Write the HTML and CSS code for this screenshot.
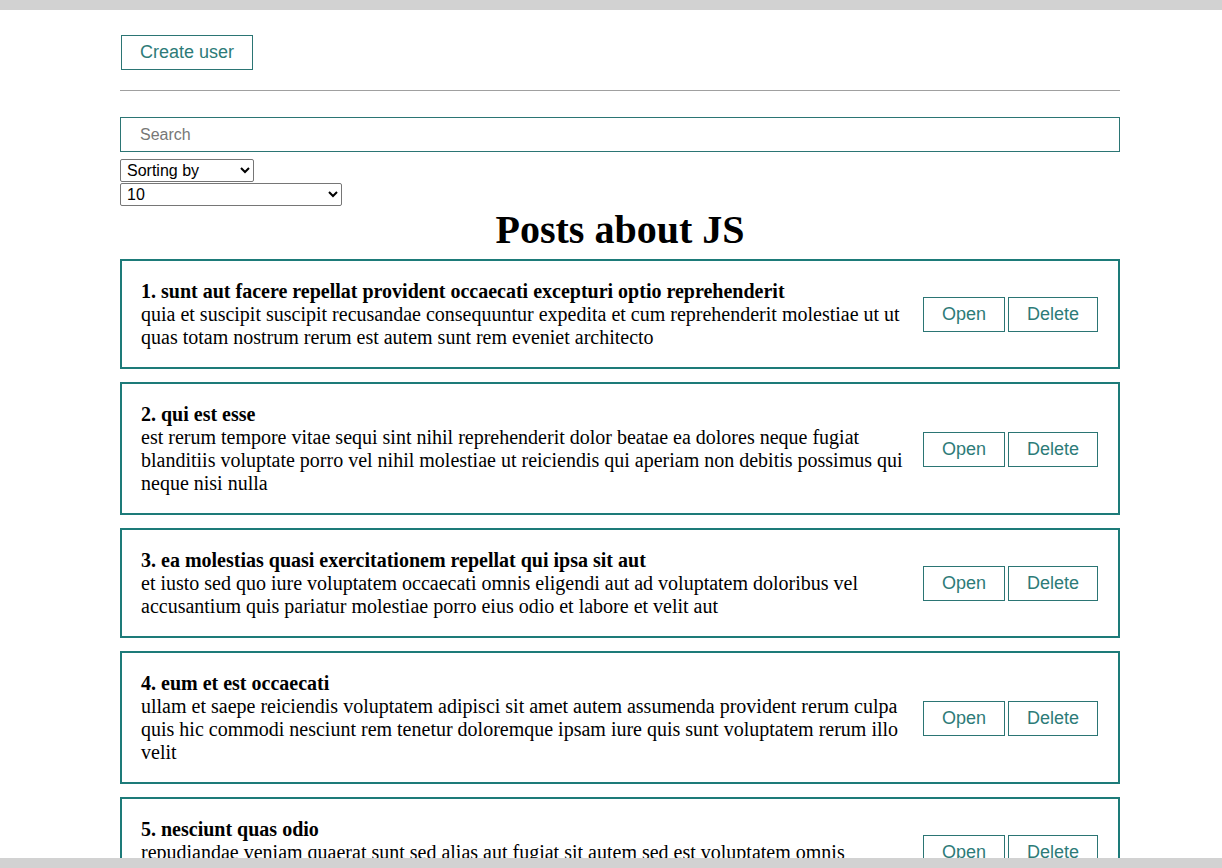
FILE: index.html
```html
<!DOCTYPE html>
<html lang="en">
<head>
<meta charset="utf-8">
<title>Posts about JS</title>
<link rel="stylesheet" href="styles.css">
</head>
<body>
<div class="topbar"></div>
<div class="app">
  <button class="btn btn-create">Create user</button>
  <hr class="divider">
  <input class="search" type="text" placeholder="Search">
  <div class="selects">
    <select class="select select-sort">
      <option>Sorting by</option>
      <option>By title</option>
      <option>By description</option>
    </select>
    <select class="select select-limit">
      <option>10</option>
      <option>25</option>
      <option>Show all posts on page</option>
    </select>
  </div>
  <h1 class="heading">Posts about JS</h1>
  <div class="posts">
    <div class="post">
      <div class="post-content">
        <strong class="post-title">1. sunt aut facere repellat provident occaecati excepturi optio reprehenderit</strong>
        <div class="post-body">quia et suscipit suscipit recusandae consequuntur expedita et cum reprehenderit molestiae ut ut quas totam nostrum rerum est autem sunt rem eveniet architecto</div>
      </div>
      <div class="post-btns">
        <button class="btn btn-post">Open</button>
        <button class="btn btn-post">Delete</button>
      </div>
    </div>
    <div class="post">
      <div class="post-content">
        <strong class="post-title">2. qui est esse</strong>
        <div class="post-body">est rerum tempore vitae sequi sint nihil reprehenderit dolor beatae ea dolores neque fugiat blanditiis voluptate porro vel nihil molestiae ut reiciendis qui aperiam non debitis possimus qui neque nisi nulla</div>
      </div>
      <div class="post-btns">
        <button class="btn btn-post">Open</button>
        <button class="btn btn-post">Delete</button>
      </div>
    </div>
    <div class="post">
      <div class="post-content">
        <strong class="post-title">3. ea molestias quasi exercitationem repellat qui ipsa sit aut</strong>
        <div class="post-body">et iusto sed quo iure voluptatem occaecati omnis eligendi aut ad voluptatem doloribus vel accusantium quis pariatur molestiae porro eius odio et labore et velit aut</div>
      </div>
      <div class="post-btns">
        <button class="btn btn-post">Open</button>
        <button class="btn btn-post">Delete</button>
      </div>
    </div>
    <div class="post">
      <div class="post-content">
        <strong class="post-title">4. eum et est occaecati</strong>
        <div class="post-body">ullam et saepe reiciendis voluptatem adipisci sit amet autem assumenda provident rerum culpa quis hic commodi nesciunt rem tenetur doloremque ipsam iure quis sunt voluptatem rerum illo velit</div>
      </div>
      <div class="post-btns">
        <button class="btn btn-post">Open</button>
        <button class="btn btn-post">Delete</button>
      </div>
    </div>
    <div class="post">
      <div class="post-content">
        <strong class="post-title">5. nesciunt quas odio</strong>
        <div class="post-body">repudiandae veniam quaerat sunt sed alias aut fugiat sit autem sed est voluptatem omnis possimus esse voluptatibus quis est aut tenetur dolor neque</div>
      </div>
      <div class="post-btns">
        <button class="btn btn-post">Open</button>
        <button class="btn btn-post">Delete</button>
      </div>
    </div>
  </div>
</div>
<div class="bottombar"></div>
</body>
</html>
```
FILE: styles.css
```css
* { box-sizing: border-box; }
html, body { margin: 0; padding: 0; background: #fff; }
body {
  font-family: "Liberation Serif", "Times New Roman", serif;
  color: #000;
}
.topbar {
  height: 10px;
  background: #d2d2d2;
}
.bottombar {
  position: fixed;
  left: 0; right: 0; bottom: 0;
  height: 10px;
  background: #d2d2d2;
}
.app {
  width: 1000px;
  margin-left: 120px;
  padding-top: 25px;
}
.btn {
  font-family: "Liberation Sans", Arial, sans-serif;
  font-size: 18px;
  color: #2d7b78;
  background: #fff;
  border: 1px solid #2b7574;
  padding: 6px 17px;
  height: 35px;
  line-height: 21px;
  cursor: pointer;
}
.btn-create { margin-left: 1px; padding: 6px 18px; }
.btn-post { padding: 6px 18px; }
.divider {
  border: none;
  border-top: 1px solid #a0a0a0;
  margin: 20px 0 26px;
  height: 0;
}
.search {
  display: block;
  width: 1000px;
  height: 35px;
  border: 1px solid #2b7574;
  padding: 0 19px;
  font-family: "Liberation Sans", Arial, sans-serif;
  font-size: 16px;
  outline: none;
}
.search::placeholder { color: #777; }
.selects {
  display: flex;
  flex-direction: column;
  align-items: flex-start;
  gap: 1px;
  margin-top: 7px;
}
.select {
  font-family: "Liberation Sans", Arial, sans-serif;
  font-size: 16px;
  height: 23px;
  padding: 0 2px;
  border: 1px solid #767676;
  border-radius: 2px;
  background: #fff;
  color: #000;
}
.select-sort { width: 134px; }
.select-limit { width: 222px; }
.heading {
  text-align: center;
  font-size: 40px;
  font-weight: bold;
  margin: 1px 0 6px;
  line-height: 46px;
}
.posts {
  display: flex;
  flex-direction: column;
  gap: 13px;
}
.post {
  display: flex;
  align-items: center;
  gap: 20px;
  border: 2px solid #1d7b79;
  padding: 19px 20px 18px 19px;
  font-size: 20px;
  line-height: 23px;
}
.post-content { flex: 1; }
.post-title { display: block; font-weight: bold; }
.post-btns {
  display: flex;
  gap: 3px;
  flex-shrink: 0;
}
```
